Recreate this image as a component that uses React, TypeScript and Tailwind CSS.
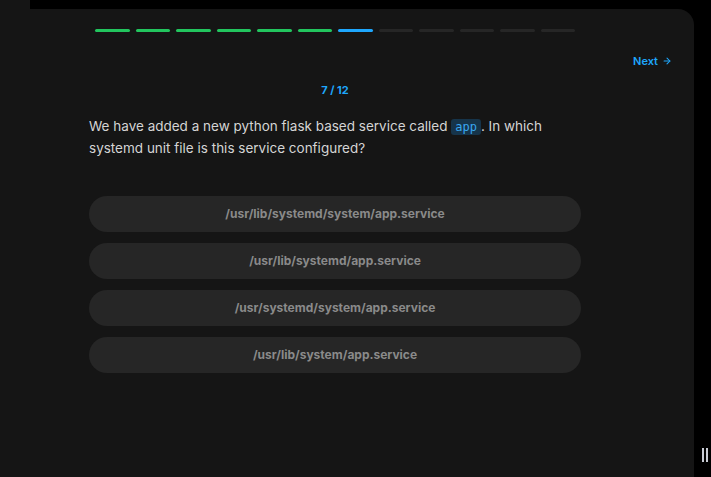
import React from "react";

const options = [
  "/usr/lib/systemd/system/app.service",
  "/usr/lib/systemd/app.service",
  "/usr/systemd/system/app.service",
  "/usr/lib/system/app.service",
];

export default function App() {
  const total = 12;
  const current = 7;

  return (
    <div
      className="relative w-[711px] h-[477px] bg-black overflow-hidden"
      style={{ fontFamily: "Inter, 'Noto Sans', sans-serif" }}
    >
      <div className="w-[30px] h-[9px] bg-[#151515]" />
      <div className="w-[694px] h-[468px] bg-[#151515] rounded-tr-[16px] flex flex-col">
        <div className="ml-[95px] mt-[20px] w-[480px] flex gap-[6px]">
          {Array.from({ length: total }).map((_, i) => (
            <div
              key={i}
              className={
                i < current - 1
                  ? "flex-1 h-[3px] rounded-full bg-[#22c55e]"
                  : i === current - 1
                  ? "flex-1 h-[3px] rounded-full bg-[#1ea7fd]"
                  : "flex-1 h-[3px] rounded-full bg-[#262626]"
              }
            />
          ))}
        </div>
        <div className="flex justify-end pr-[22px] mt-[21px]">
          <button className="flex items-center gap-[4px] text-[11px] font-semibold text-[#1ea7fd]">
            Next
            <svg width="10" height="10" viewBox="0 0 24 24" fill="none" stroke="currentColor" strokeWidth="2.5" strokeLinecap="round" strokeLinejoin="round">
              <path d="M5 12h14" />
              <path d="M12 5l7 7-7 7" />
            </svg>
          </button>
        </div>
        <div className="ml-[89px] w-[492px] flex flex-col">
          <div className="mt-[12px] text-center text-[11px] font-bold text-[#1ea7fd]">
            {current} / {total}
          </div>
          <p className="mt-[18px] text-[13.5px] leading-[21px] text-[#d4d4d4]">
            We have added a new python flask based service called{" "}
            <code
              className="px-[4px] py-[1px] rounded-[3px] bg-[#16344a] text-[#3aa8f0] text-[12px]"
              style={{ fontFamily: "'DejaVu Sans Mono', monospace" }}
            >
              app
            </code>
            . In which systemd unit file is this service configured?
          </p>
          <div className="mt-[37px] flex flex-col gap-[11px]">
            {options.map((o) => (
              <button
                key={o}
                className="h-[36px] w-full rounded-full bg-[#262626] text-[12px] font-bold text-[#8a8a8a]"
              >
                {o}
              </button>
            ))}
          </div>
        </div>
      </div>
      <div className="absolute left-[702px] top-[448px] flex gap-[2px]">
        <div className="w-[2px] h-[14px] bg-[#c8ccd4]" />
        <div className="w-[2px] h-[14px] bg-[#c8ccd4]" />
      </div>
    </div>
  );
}
